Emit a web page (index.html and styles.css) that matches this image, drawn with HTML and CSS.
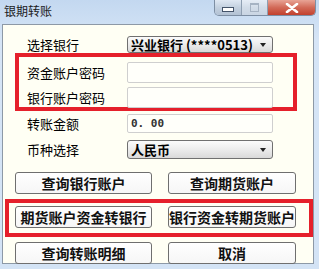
FILE: index.html
```html
<!DOCTYPE html>
<html lang="zh-CN">
<head>
    <meta charset="UTF-8">
    <title>银期转账</title>
    <link rel="stylesheet" href="styles.css">
</head>
<body>

<div class="window">
    <div class="titlebar">
        <span class="title">银期转账</span>
        <div class="controls">
            <span class="ctl min"><i></i></span>
            <span class="ctl max"><i></i></span>
            <span class="ctl close">
                <svg width="14" height="10" viewBox="0 0 14 10">
                    <path d="M2 1 L12 9 M12 1 L2 9" stroke="#fff" stroke-width="2.6" stroke-linecap="round"/>
                </svg>
            </span>
        </div>
    </div>

    <div class="client">
        <div class="row first">
            <label>选择银行</label>
            <div class="select">兴业银行 (****0513)</div>
        </div>

        <div class="mark pwd">
            <div class="row">
                <label>资金账户密码</label>
                <div class="input"></div>
            </div>
            <div class="row gap">
                <label>银行账户密码</label>
                <div class="input"></div>
            </div>
        </div>

        <div class="row amount">
            <label>转账金额</label>
            <div class="input num">0. 00</div>
        </div>
        <div class="row currency">
            <label>币种选择</label>
            <div class="select">人民币</div>
        </div>

        <div class="buttons top">
            <button class="btn wide">查询银行账户</button>
            <button class="btn">查询期货账户</button>
        </div>
        <div class="mark transfer">
            <div class="buttons">
                <button class="btn wide">期货账户资金转银行</button>
                <button class="btn">银行资金转期货账户</button>
            </div>
        </div>
        <div class="buttons last">
            <button class="btn wide">查询转账明细</button>
            <button class="btn">取消</button>
        </div>
    </div>
</div>

</body>
</html>
```

FILE: styles.css
```css
body {
    margin: 0;
    padding: 0;
    font-family: "Noto Sans CJK SC", "Liberation Sans", sans-serif;
    background: #d3e3f5;
}
.window {
    width: 319px;
    height: 269px;
    background: linear-gradient(#c3d8f0, #d6e5f6 40px, #d3e3f5);
    overflow: hidden;
}
.titlebar {
    height: 24px;
    display: flex;
    justify-content: space-between;
    align-items: flex-start;
}
.title {
    font-size: 12px;
    line-height: 22px;
    padding-left: 4px;
    color: #1b1b1b;
}
.controls {
    display: flex;
    margin-right: 3px;
    height: 15px;
    border: 1px solid #7d8ea3;
    border-top: none;
    border-radius: 0 0 5px 5px;
    overflow: hidden;
}
.ctl {
    display: flex;
    align-items: center;
    justify-content: center;
    height: 15px;
}
.min {
    width: 26px;
    background: linear-gradient(#dfe8f3, #c3d0df 50%, #b3c2d4);
    border-right: 1px solid #8f9fb2;
}
.min i {
    width: 10px;
    height: 3px;
    margin-top: 4px;
    background: #fff;
    border: 1px solid #44546a;
}
.max {
    width: 25px;
    background: linear-gradient(#e6edf6, #d2dce8 50%, #c9d5e3);
    border-right: 1px solid #8f9fb2;
}
.max i {
    width: 7px;
    height: 6px;
    border: 1px solid #a6b3c3;
    border-top-width: 2px;
}
.close {
    width: 47px;
    background: linear-gradient(#e8a496, #d26a58 50%, #c2412d);
}
.client {
    margin: 0 5px 0 2px;
    height: 238px;
    border: 1px solid #8d99a6;
    background: #fffff4;
    font-size: 13px;
}
.row {
    display: grid;
    grid-template-columns: 100px 146px;
    align-items: center;
    padding-left: 24px;
}
.row label {
    color: #000;
}
.first {
    margin-top: 10px;
    height: 17px;
}
.select {
    height: 15px;
    line-height: 15px;
    border: 1px solid #707070;
    border-radius: 3px;
    background: linear-gradient(#fbfbfb, #ececec 50%, #d9d9d9);
    font-weight: bold;
    font-size: 13px;
    padding-left: 3px;
    position: relative;
}
.select::after {
    content: "";
    position: absolute;
    right: 6px;
    top: 6px;
    border-left: 3px solid transparent;
    border-right: 3px solid transparent;
    border-top: 4px solid #222;
}
.input {
    height: 18px;
    border: 1px solid #cfcfcf;
    border-radius: 2px;
    background: #fffffa;
}
.mark {
    border: 4px solid #e5202b;
}
.pwd {
    margin: 1px 0 0 12px;
    width: 274px;
    padding: 5px 0 0 0;
    height: 45px;
}
.pwd .row {
    padding-left: 8px;
}
.pwd .input {
    height: 19px;
}
.pwd .gap {
    margin-top: 4px;
}
.amount {
    margin-top: 3px;
}
.num {
    font-family: "DejaVu Sans Mono", monospace;
    font-weight: bold;
    font-size: 11px;
    line-height: 18px;
    color: #333;
    padding-left: 3px;
    box-sizing: border-box;
    height: 19px;
}
.currency {
    margin-top: 7px;
}
.currency .select {
    height: 17px;
    line-height: 17px;
}
.currency .select::after {
    top: 7px;
}
.buttons {
    display: flex;
    gap: 16px;
    padding-left: 12px;
}
.btn {
    height: 22px;
    width: 128px;
    padding: 0;
    border: 1px solid #6f6f6f;
    border-radius: 3px;
    background: linear-gradient(#ffffff, #f6f6f6);
    font-family: "Noto Sans CJK SC", sans-serif;
    font-weight: bold;
    font-size: 14px;
    line-height: 20px;
    color: #111;
    white-space: nowrap;
}
.btn.wide {
    width: 137px;
}
.top {
    margin-top: 13px;
}
.transfer {
    margin: 5px 0 0 2px;
    width: 300px;
    height: 27px;
    padding-top: 3px;
}
.transfer .buttons {
    padding-left: 6px;
}
.last {
    margin-top: 5px;
}
```
